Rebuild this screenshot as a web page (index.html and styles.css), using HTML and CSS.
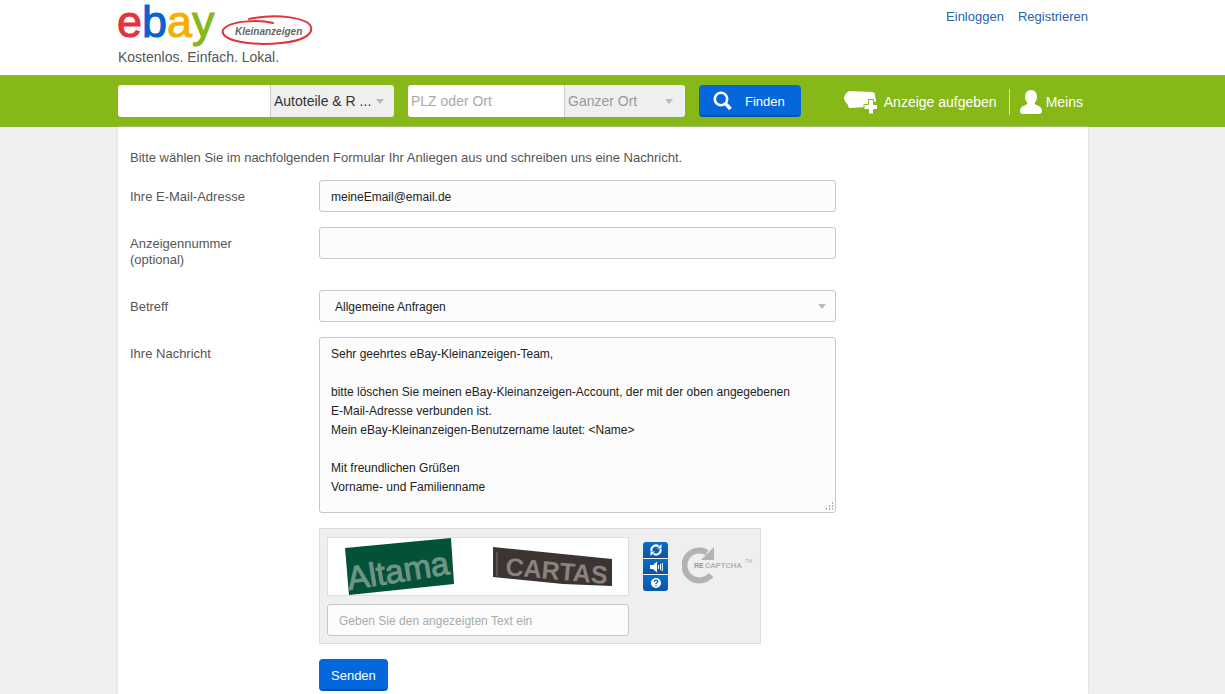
FILE: index.html
```
<!DOCTYPE html>
<html lang="de">
<head>
  <meta charset="UTF-8">
  <title>Kontakt - eBay Kleinanzeigen</title>
  <link rel="stylesheet" href="styles.css">
</head>
<body>
  <header class="header">
    <div class="wrap header-inner">
      <div class="brand">
        <a href="#" class="logo" aria-label="eBay Kleinanzeigen">
          <svg width="196" height="48" viewBox="0 0 196 48">
            <text class="logo-ebay" x="-1" y="37"><tspan fill="#e5323c" stroke="#e5323c">e</tspan><tspan fill="#0a62d0" stroke="#0a62d0">b</tspan><tspan fill="#f5af02" stroke="#f5af02">a</tspan><tspan fill="#86b817" stroke="#86b817">y</tspan></text>
            <path d="M155 23C140 19 110 21 105 30C101 41 135 46 163 43C184 41 195 35 193 27C190 18 160 13 131 19" fill="none" stroke="#e2343c" stroke-width="2" stroke-linecap="round"/>
            <text class="logo-sub" x="117" y="35">Kleinanzeigen</text>
          </svg>
        </a>
        <div class="claim">Kostenlos. Einfach. Lokal.</div>
      </div>
      <nav class="user-nav">
        <a href="#">Einloggen</a>
        <a href="#">Registrieren</a>
      </nav>
    </div>
  </header>

  <div class="bar">
    <div class="wrap bar-inner">
      <form class="search" onsubmit="return false;">
        <div class="group group-what">
          <input type="text" aria-label="Suchbegriff">
          <div class="select">
            <select aria-label="Kategorie">
              <option>Autoteile &amp; R ...</option>
            </select>
          </div>
        </div>
        <div class="group group-where">
          <input type="text" placeholder="PLZ oder Ort" aria-label="PLZ oder Ort">
          <div class="select muted">
            <select aria-label="Umkreis">
              <option>Ganzer Ort</option>
            </select>
          </div>
        </div>
        <button type="submit" class="btn btn-search">
          <svg width="20" height="20" viewBox="0 0 20 20">
            <circle cx="8" cy="8" r="6.2" fill="none" stroke="#fff" stroke-width="2.6"/>
            <path d="M12.500 12.500L17.500 18" stroke="#fff" stroke-width="3.4"/>
          </svg>
          Finden
        </button>
      </form>
      <nav class="bar-nav">
        <a href="#">
          <svg width="34" height="24" viewBox="0 0 34 24">
            <path d="M5 1L28 2Q31 2 31 5L32 12L26 11L22 17L6 18Q4 18 4 15Q0 11 0 8Q1 3 5 1Z" fill="#fff"/>
            <path d="M20 14.500h4.500v-5h5v5h4v5h-4v4.500h-5v-4.500H20z" fill="#fff" stroke="#86b817" stroke-width="1"/>
          </svg>
          Anzeige aufgeben
        </a>
        <a href="#" class="account">
          <svg width="24" height="26" viewBox="0 0 24 26">
            <path d="M12 1C16 1 18 4 18 8C18 11 16.500 13 15.500 14C16 17 23 16 23 22Q23 25 20 25H4Q1 25 1 22C1 16 8 17 8.500 14C7.500 13 6 11 6 8C6 4 8 1 12 1Z" fill="#fff"/>
          </svg>
          Meins
        </a>
      </nav>
    </div>
  </div>

  <div class="content">
    <main class="wrap page">
      <p class="intro">Bitte wählen Sie im nachfolgenden Formular Ihr Anliegen aus und schreiben uns eine Nachricht.</p>
      <form class="contact" onsubmit="return false;">
        <div class="row">
          <label for="email">Ihre E-Mail-Adresse</label>
          <div class="field"><input type="text" id="email" class="control" value="meineEmail@email.de"></div>
        </div>
        <div class="row">
          <label for="adid">Anzeigennummer<br>(optional)</label>
          <div class="field"><input type="text" id="adid" class="control"></div>
        </div>
        <div class="row">
          <label for="subject">Betreff</label>
          <div class="field select">
            <select id="subject" class="control">
              <option>Allgemeine Anfragen</option>
            </select>
          </div>
        </div>
        <div class="row">
          <label for="message">Ihre Nachricht</label>
          <div class="field message">
            <textarea id="message" class="control">Sehr geehrtes eBay-Kleinanzeigen-Team,

bitte löschen Sie meinen eBay-Kleinanzeigen-Account, der mit der oben angegebenen
E-Mail-Adresse verbunden ist.
Mein eBay-Kleinanzeigen-Benutzername lautet: &lt;Name&gt;

Mit freundlichen Grüßen
Vorname- und Familienname</textarea>
            <svg class="grip" width="10" height="10" viewBox="0 0 10 10">
              <path d="M8 0h1v2h-1zM5 3h1v2h-1zM8 3h1v2h-1zM2 6h1v2h-1zM5 6h1v2h-1zM8 6h1v2h-1z" fill="#aaa"/>
            </svg>
          </div>
        </div>
        <div class="row indent">
          <div class="captcha">
            <div class="captcha-main">
              <div class="captcha-image">
                <svg width="300" height="57" viewBox="0 0 300 57">
                  <path d="M17 10L123 0L126 46L21 57Z" fill="#04513a"/>
                  <text class="word-one" transform="rotate(-9 21 52)" x="21" y="52">Altama</text>
                  <path d="M165 9L284 21V48L235 46L165 39Z" fill="#3b3431"/>
                  <path d="M169 14V38" stroke="#5c5451" stroke-width="2"/>
                  <text class="word-two" transform="rotate(5 177 37)" x="177" y="37">CARTAS</text>
                </svg>
              </div>
              <input type="text" class="control" placeholder="Geben Sie den angezeigten Text ein" aria-label="Geben Sie den angezeigten Text ein">
            </div>
            <div class="captcha-tools">
              <button type="button" aria-label="Neues Bild">
                <svg width="14" height="14" viewBox="0 0 14 14">
                  <path d="M2.500 8A4.500 4.500 0 0 1 9.500 3.300M11.500 6A4.500 4.500 0 0 1 4.500 10.700" fill="none" stroke="#fff" stroke-width="2"/>
                  <path d="M8 5.500H12.500V1ZM6 8.500H1.500V13Z" fill="#fff"/>
                </svg>
              </button>
              <button type="button" aria-label="Audio">
                <svg width="14" height="14" viewBox="0 0 14 14">
                  <path d="M1 5h3l4-3.500v11L4 9H1z" fill="#fff"/>
                  <path d="M9.500 5v4M11.500 4v6M13.300 3v8" stroke="#fff" stroke-width="1"/>
                </svg>
              </button>
              <button type="button" aria-label="Hilfe">
                <svg width="14" height="14" viewBox="0 0 14 14">
                  <circle cx="7" cy="7" r="5" fill="#fff"/>
                  <path d="M5.300 5.800Q5.500 4.200 7 4.200Q8.800 4.300 8.700 5.800Q8.500 6.600 7 7.300V8.200M7 9.200v1.300" fill="none" stroke="#0a5cb0" stroke-width="1.300"/>
                </svg>
              </button>
            </div>
            <svg class="recaptcha" width="71" height="38" viewBox="0 0 71 38">
              <path d="M29 29A15 15 0 1 1 25 6.500" fill="none" stroke="#b3b3b3" stroke-width="6"/>
              <path d="M32 1V14H19Z" fill="#b3b3b3"/>
              <text class="rc-re" x="12" y="22">RE</text>
              <text class="rc-name" x="23" y="22">CAPTCHA</text>
              <text class="rc-tm" x="63" y="17">TM</text>
            </svg>
          </div>
        </div>
        <div class="row indent">
          <button type="submit" class="btn">Senden</button>
        </div>
      </form>
    </main>
  </div>
</body>
</html>
```
FILE: styles.css
```
* {
  box-sizing: border-box;
}

body {
  margin: 0;
  min-height: 100vh;
  display: flex;
  flex-direction: column;
  font-family: "Liberation Sans", Arial, sans-serif;
  font-size: 13px;
  line-height: 16px;
  color: #555;
  background: #efefef;
}

input, select, textarea, button {
  font-family: inherit;
  margin: 0;
}

a {
  text-decoration: none;
}

svg {
  display: block;
  flex-shrink: 0;
}

.header, .bar, .content {
  padding-right: 19px;
}

.wrap {
  width: 100%;
  max-width: 970px;
  margin: 0 auto;
}

/* header */
.header {
  background: #fff;
}

.header-inner {
  display: flex;
  justify-content: space-between;
  height: 75px;
}

.logo svg {
  overflow: visible;
}

.logo-ebay {
  font-size: 45px;
}

.logo-ebay tspan {
  stroke-width: 1px;
}

.logo-sub {
  font-size: 10px;
  font-weight: bold;
  font-style: italic;
  fill: #666;
}

.claim {
  font-size: 14px;
  line-height: 18px;
}

.user-nav {
  display: flex;
  gap: 14px;
  padding-top: 9px;
}

.user-nav a {
  color: #2a62ab;
}

/* green bar */
.bar {
  background: #86b817;
  border-top: 1px solid #93b552;
  border-bottom: 1px solid #8bb436;
}

.bar-inner {
  display: flex;
  align-items: center;
  justify-content: space-between;
  height: 50px;
}

.search {
  display: flex;
  gap: 14px;
}

.group {
  display: flex;
  height: 32px;
  border-radius: 3px;
  overflow: hidden;
}

.group-what {
  width: 276px;
}

.group-where {
  width: 277px;
}

.group input {
  flex: 1;
  min-width: 0;
  padding: 0 3px;
  border: none;
  font-size: 14px;
  background: #fff;
}

.group .select {
  width: 124px;
  border-left: 1px solid #ccc;
}

.group .muted {
  width: 121px;
}

.group select {
  width: 100%;
  height: 32px;
  padding: 0 3px;
  border: none;
  font-size: 14px;
  color: #333;
  background: #efefef;
}

.group .muted select {
  color: #999;
}

::placeholder {
  color: #aaa;
  opacity: 1;
}

.select {
  position: relative;
}

.select select {
  appearance: none;
}

.select::after {
  content: "";
  position: absolute;
  right: 10px;
  top: 14px;
  border: 4px solid transparent;
  border-top: 5px solid #bbb;
  border-bottom: none;
  pointer-events: none;
}

.group .muted::after {
  right: 12px;
}

.btn {
  height: 32px;
  padding: 2px 12px 0;
  border: none;
  border-bottom: 2px solid #0553b0;
  border-radius: 4px;
  background: #0468dc;
  color: #fff;
  font-size: 13px;
  cursor: pointer;
}

.btn-search {
  display: flex;
  align-items: center;
  gap: 12px;
  width: 102px;
  padding: 2px 14px 0;
}

.bar-nav {
  display: flex;
  align-items: center;
  padding: 2px 5px 0 0;
}

.bar-nav a {
  display: flex;
  align-items: center;
  gap: 6px;
  height: 26px;
  color: #fff;
  font-size: 14px;
}

.bar-nav .account {
  gap: 3px;
  margin-left: 12px;
  padding-left: 9px;
  border-left: 1px solid #d5e6ac;
}

/* page */
.content {
  flex: 1;
  display: flex;
}

.page {
  padding: 23px 12px 0;
  background: #fff;
  box-shadow: 0 0 2px #ccc;
}

.intro {
  margin: 0 0 14px;
}

.contact {
  display: flex;
  flex-direction: column;
  gap: 15px;
}

.row {
  display: flex;
}

.row label {
  width: 189px;
  padding: 9px 0 7px;
}

.field {
  flex: 0 1 517px;
}

.indent {
  padding-left: 189px;
}

.control {
  display: block;
  width: 100%;
  height: 32px;
  padding: 1px 11px 0;
  border: 1px solid #c8c8c8;
  border-radius: 3px;
  background: #fcfcfc;
  color: #222;
  font-size: 12px;
}

select.control {
  padding: 1px 15px 0;
}

.message {
  position: relative;
}

textarea.control {
  height: 176px;
  padding: 7px 11px;
  line-height: 19px;
  resize: none;
}

.grip {
  position: absolute;
  right: 2px;
  bottom: 1px;
}

/* captcha */
.captcha {
  display: flex;
  flex: 0 1 442px;
  gap: 14px;
  padding: 8px 7px 7px;
  border: 1px solid #ddd;
  background: #efefef;
}

.captcha-main {
  flex: 0 1 302px;
}

.captcha-image {
  margin-bottom: 8px;
  border: 1px solid #ddd;
  background: #fff;
  overflow: hidden;
}

.word-one {
  font-size: 33px;
  fill: #6f9484;
  stroke: #6f9484;
}

.word-two {
  font-size: 25px;
  font-weight: bold;
  fill: #8b827f;
}

.captcha-tools {
  display: flex;
  flex-direction: column;
  gap: 1px;
  width: 25px;
  height: 49px;
  margin-top: 5px;
  border-radius: 3px;
  overflow: hidden;
}

.captcha-tools button {
  display: flex;
  flex: 1;
  align-items: center;
  justify-content: center;
  padding: 0;
  border: none;
  background: linear-gradient(#0a6cc8, #0a55a5);
  cursor: pointer;
}

.recaptcha {
  margin-top: 9px;
}

.recaptcha text {
  font-weight: bold;
  fill: #b3b3b3;
}

.recaptcha .rc-re {
  font-size: 7px;
  fill: #999;
}

.rc-name {
  font-family: Roboto, "Liberation Sans", sans-serif;
  font-size: 8px;
}

.recaptcha .rc-tm {
  font-size: 5px;
  font-weight: normal;
}
```
